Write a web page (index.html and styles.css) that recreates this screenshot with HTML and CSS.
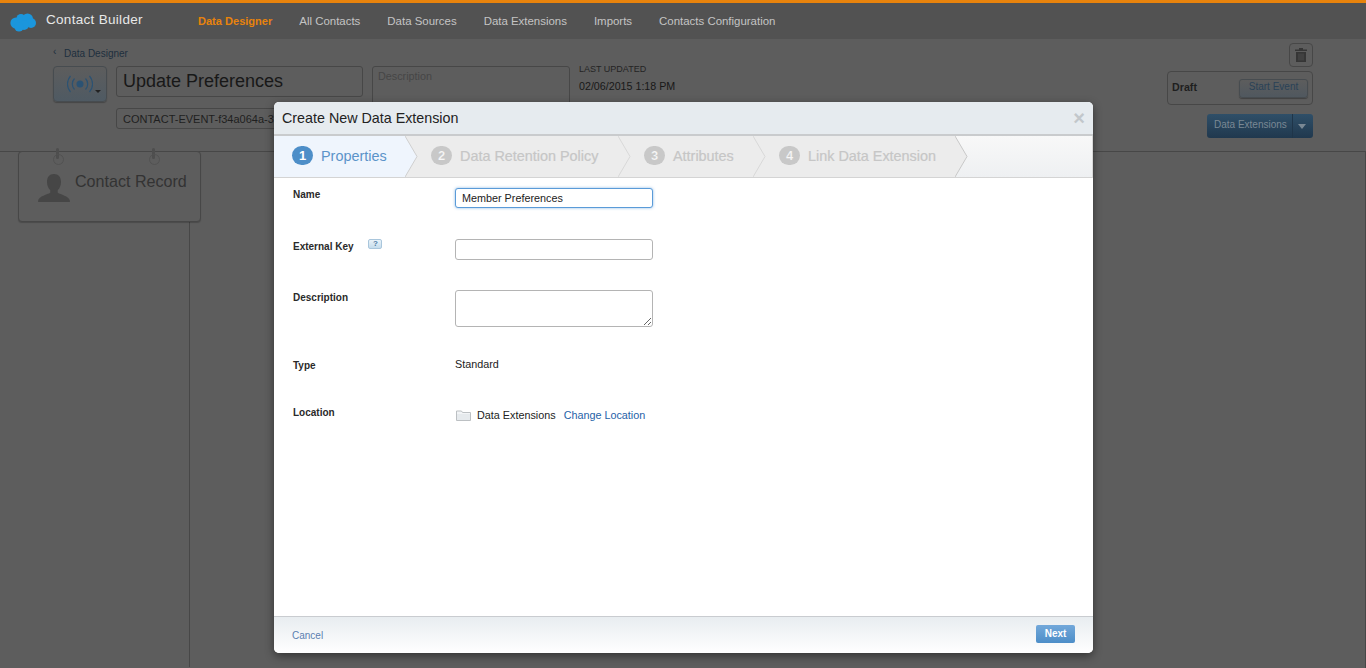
FILE: index.html
```html
<!DOCTYPE html>
<html lang="en">
<head>
    <meta charset="UTF-8">
    <meta name="viewport" content="width=device-width, initial-scale=1.0">
    <title>Contact Builder</title>
    <link rel="stylesheet" href="styles.css">
</head>
<body>
    <header class="topbar">
        <svg class="logo" width="26" height="19" viewBox="0 0 26 19">
            <g fill="#1b96dc">
                <circle cx="6" cy="10" r="5.6"/>
                <circle cx="11" cy="5.5" r="4.6"/>
                <circle cx="17.5" cy="6" r="5.5"/>
                <circle cx="21" cy="10" r="5"/>
                <circle cx="14" cy="12" r="5"/>
                <circle cx="9" cy="14" r="4.6"/>
            </g>
        </svg>
        <span class="app-name">Contact Builder</span>
        <nav class="nav">
            <a class="nav-item active">Data Designer</a>
            <a class="nav-item">All Contacts</a>
            <a class="nav-item">Data Sources</a>
            <a class="nav-item">Data Extensions</a>
            <a class="nav-item">Imports</a>
            <a class="nav-item">Contacts Configuration</a>
        </nav>
    </header>

    <section class="designer">
        <div class="designer-left">
            <div class="breadcrumb"><span class="crumb-arrow">‹</span>Data Designer</div>
            <div class="event-row">
                <button class="icon-btn">
                    <svg width="26" height="18" viewBox="0 0 26 18" fill="none" stroke="#2b5273" stroke-width="1.2">
                        <circle cx="13" cy="9" r="3.500" fill="#2b5273" stroke="none"/>
                        <path d="M7.500 3.500a8 8 0 0 0 0 11"/>
                        <path d="M18.500 3.500a8 8 0 0 1 0 11"/>
                        <path d="M3.500 1a12 12 0 0 0 0 16"/>
                        <path d="M22.500 1a12 12 0 0 1 0 16"/>
                    </svg>
                    <span class="icon-caret"></span>
                </button>
                <div class="event-fields">
                    <div class="field title-field">Update Preferences</div>
                    <div class="field key-field">CONTACT-EVENT-f34a064a-32</div>
                </div>
                <div class="field desc-field">Description</div>
                <div class="updated">
                    <div class="updated-label">LAST UPDATED</div>
                    <div class="updated-date">02/06/2015 1:18 PM</div>
                </div>
            </div>
        </div>
        <div class="designer-right">
            <button class="trash-btn">
                <svg width="12" height="14" viewBox="0 0 12 14" fill="#363636">
                    <path d="M0 1.500h12v1.500H0zM4 0h4v1.500H4zM1 4h10v10H1z"/>
                    <path d="M3.500 5.500h1v7h-1zM5.500 5.500h1v7h-1zM7.500 5.500h1v7h-1z" fill="#4c4c4c"/>
                </svg>
            </button>
            <div class="status-box">
                <strong class="status-text">Draft</strong>
                <button class="start-btn">Start Event</button>
            </div>
            <div class="split-btn">
                <span class="split-label">Data Extensions</span>
                <span class="split-arrow"></span>
            </div>
        </div>
    </section>

    <section class="canvas">
        <div class="lane">
            <div class="card">
                <span class="pin pin-a"></span>
                <span class="pin pin-b"></span>
                <svg class="person" width="32" height="28" viewBox="0 0 34 30" fill="#464646">
                    <path d="M17 0c5 0 7.500 3.500 7.500 8.500 0 3.500-1.500 7-3.500 9v2.500c3 2 12 3.500 13 8.500v1.500H0v-1.500c1-5 10-6.500 13-8.500v-2.500c-2-2-3.500-5.500-3.500-9C9.500 3.500 12 0 17 0z"/>
                </svg>
                <span class="card-title">Contact Record</span>
            </div>
        </div>
    </section>

    <div class="modal">
        <div class="modal-head">
            <span class="modal-title">Create New Data Extension</span>
            <span class="modal-close">×</span>
        </div>
        <div class="steps">
            <div class="step step-active">
                <span class="step-num">1</span>Properties
                <svg class="step-tip" width="13" height="41" viewBox="0 0 13 41"><path d="M0 0L12 20.500 0 41z" fill="#eff5fd"/><path d="M0 0L12 20.500 0 41" fill="none" stroke="#cfcfcf"/></svg>
            </div>
            <div class="step step-two">
                <span class="step-num">2</span>Data Retention Policy
                <svg class="step-tip" width="13" height="41" viewBox="0 0 13 41"><path d="M0 0L12 20.500 0 41" fill="#ececec" stroke="#d8d8d8"/></svg>
            </div>
            <div class="step step-three">
                <span class="step-num">3</span>Attributes
                <svg class="step-tip" width="13" height="41" viewBox="0 0 13 41"><path d="M0 0L12 20.500 0 41" fill="#ececec" stroke="#d8d8d8"/></svg>
            </div>
            <div class="step step-four">
                <span class="step-num">4</span>Link Data Extension
                <svg class="step-tip" width="13" height="41" viewBox="0 0 13 41"><path d="M0 0L12 20.500 0 41" fill="#ececec" stroke="#c8c8c8"/></svg>
            </div>
        </div>
        <form class="modal-body">
            <div class="form-row row-name">
                <label class="form-label">Name</label>
                <input class="text-input focused" type="text" value="Member Preferences">
            </div>
            <div class="form-row row-key">
                <label class="form-label">External Key <span class="help">?</span></label>
                <input class="text-input" type="text">
            </div>
            <div class="form-row row-desc">
                <label class="form-label">Description</label>
                <textarea class="text-area"></textarea>
            </div>
            <div class="form-row row-type">
                <label class="form-label">Type</label>
                <span class="form-value">Standard</span>
            </div>
            <div class="form-row row-location">
                <label class="form-label">Location</label>
                <span class="form-value location">
                    <svg width="15" height="11" viewBox="0 0 15 11">
                        <path d="M.5 1h5l1 1.500h8v8H.5z" fill="#f2f4f6" stroke="#bcc0c3"/>
                        <path d="M1 4h13v6H1z" fill="#e6eaed"/>
                    </svg>
                    <span>Data Extensions</span>
                    <a class="link">Change Location</a>
                </span>
            </div>
        </form>
        <div class="modal-foot">
            <a class="cancel">Cancel</a>
            <button class="next-btn">Next</button>
        </div>
    </div>
</body>
</html>
```

FILE: styles.css
```css
* {
    margin: 0;
    padding: 0;
    box-sizing: border-box;
}

:root {
    --page: #5d5d5d;
    --line: #474747;
    --ink: #1f1f1f;
    --blue: #4d8ec8;
}

html, body {
    height: 100%;
}

body {
    display: flex;
    flex-direction: column;
    overflow: hidden;
    background: var(--page);
    color: var(--ink);
    font-family: "Liberation Sans", Arial, sans-serif;
    font-size: 11px;
}

button {
    font-family: inherit;
}

/* Top bar */
.topbar {
    display: flex;
    align-items: center;
    flex: none;
    height: 39px;
    padding-left: 10px;
    border-top: 3px solid #e8830c;
    background: #525252;
}

.logo {
    flex: none;
    margin-top: 2px;
}

.app-name {
    width: 152px;
    margin-left: 10px;
    margin-top: -3px;
    color: #e8e8e8;
    font-size: 13.5px;
    letter-spacing: 0.3px;
}

.nav {
    display: flex;
    gap: 27px;
}

.nav-item {
    color: #c4c4c4;
    font-size: 11.450px;
}

.nav-item.active {
    color: #e8830c;
    font-size: 11.050px;
    font-weight: bold;
}

/* Event header */
.designer {
    display: flex;
    justify-content: space-between;
    flex: none;
    height: 112px;
    padding: 0 53px;
}

.breadcrumb {
    height: 27px;
    padding-top: 7px;
    color: #1e2f3d;
    font-size: 10px;
}

.crumb-arrow {
    display: inline-block;
    width: 11px;
    vertical-align: 2px;
}

.event-row {
    display: flex;
}

.icon-btn {
    display: flex;
    justify-content: center;
    align-items: center;
    width: 54px;
    height: 36px;
    border: 1px solid #474c50;
    border-radius: 4px;
    background: linear-gradient(#5d5d5d, #4f5a63);
    box-shadow: 0 1px 1px rgba(0, 0, 0, 0.25);
    position: relative;
}

.icon-caret {
    position: absolute;
    right: 5px;
    bottom: 8px;
    border: 3px solid transparent;
    border-top-color: #222;
    border-bottom: 0;
}

.event-fields {
    width: 247px;
    margin-left: 9px;
    margin-right: 9px;
}

.field {
    border: 1px solid var(--line);
    border-radius: 3px;
}

.title-field {
    height: 31px;
    padding-left: 6px;
    color: #181818;
    font-size: 18px;
    line-height: 28px;
}

.key-field {
    width: 175px;
    height: 21px;
    margin-top: 11px;
    padding-left: 6px;
    font-size: 11px;
    line-height: 20px;
    white-space: nowrap;
}

.desc-field {
    width: 198px;
    height: 50px;
    padding: 3px 5px;
    color: #464646;
    font-size: 10.800px;
}

.updated {
    margin-left: 9px;
    margin-top: -2px;
}

.updated-label {
    color: #242424;
    font-size: 9px;
}

.updated-date {
    margin-top: 6px;
    color: #181818;
    font-size: 10.700px;
}

.designer-right {
    display: flex;
    flex-direction: column;
    align-items: flex-end;
    padding-top: 4px;
}

.trash-btn {
    display: flex;
    justify-content: center;
    align-items: center;
    width: 24px;
    height: 24px;
    border: 1px solid var(--line);
    border-radius: 4px;
    background: none;
}

.status-box {
    display: flex;
    justify-content: space-between;
    align-items: center;
    width: 146px;
    height: 34px;
    margin-top: 4px;
    padding: 0 4px 0 4px;
    border: 1px solid var(--line);
    border-radius: 4px;
    font-size: 10.700px;
}

.status-text {
    margin-top: -2px;
}

.start-btn {
    width: 69px;
    height: 19px;
    padding-bottom: 3px;
    border: 1px solid #474c50;
    border-radius: 3px;
    background: linear-gradient(#5d5d5d, #50585f);
    box-shadow: 0 1px 1px rgba(0, 0, 0, 0.3);
    color: #2a4257;
    font-size: 10px;
}

.split-btn {
    display: flex;
    width: 106px;
    height: 24px;
    margin-top: 9px;
    border-radius: 3px;
    background: linear-gradient(#2f4f68, #20384e);
    color: #7a8894;
    font-size: 10px;
    line-height: 22px;
}

.split-label {
    width: 86px;
    padding-left: 7px;
    border-right: 1px solid #1f3549;
    white-space: nowrap;
}

.split-arrow {
    align-self: center;
    margin-left: 5px;
    border: 4px solid transparent;
    border-top: 5px solid #7a8894;
    border-bottom: 0;
}

/* Canvas behind the dialog */
.canvas {
    flex: 1;
    border-top: 1px solid var(--line);
    border-right: 1px solid var(--line);
}

.lane {
    width: 190px;
    height: 100%;
    border-right: 1px solid var(--line);
}

.card {
    display: flex;
    position: relative;
    width: 183px;
    height: 71px;
    margin-left: 18px;
    margin-top: -1px;
    border: 1px solid var(--line);
    border-radius: 4px;
    background: var(--page);
    box-shadow: 0 1px 1px rgba(0, 0, 0, 0.2);
}

.pin {
    position: absolute;
    top: -4px;
    width: 3px;
    height: 11px;
    border-radius: 2px;
    background: #4e4e4e;
}

.pin::after {
    content: "";
    position: absolute;
    left: -3px;
    top: 6px;
    width: 9px;
    height: 9px;
    border: 1px solid #525252;
    border-radius: 50%;
}

.pin-a {
    left: 37px;
}

.pin-b {
    left: 133px;
}

.person {
    margin: 22px 0 0 19px;
}

.card-title {
    margin: 20px 0 0 5px;
    color: #333;
    font-size: 16.100px;
    white-space: nowrap;
}

/* Dialog */
.modal {
    display: flex;
    flex-direction: column;
    position: absolute;
    left: 274px;
    top: 102px;
    width: 819px;
    height: 551px;
    border-radius: 5px;
    background: #fff;
    box-shadow: 0 3px 10px rgba(0, 0, 0, 0.45);
    overflow: hidden;
}

.modal-head {
    display: flex;
    justify-content: space-between;
    align-items: center;
    flex: none;
    height: 34px;
    padding: 0 8px;
    border-bottom: 2px solid #c9cbcd;
    background: #e6ebef;
}

.modal-title {
    color: #222;
    font-size: 14.300px;
}

.modal-close {
    color: #c2c7cb;
    font-size: 20px;
    font-weight: bold;
    line-height: 1;
}

.steps {
    display: flex;
    flex: none;
    height: 42px;
    border-bottom: 1px solid #d4d4d4;
    border-right: 1px solid #d8d8d8;
    background: linear-gradient(#f8f8f8, #eef0f2);
}

.step {
    display: flex;
    align-items: center;
    position: relative;
    padding-left: 26px;
    padding-bottom: 2px;
    background: #ececec;
    color: #c6c6c6;
    font-size: 14.400px;
    white-space: nowrap;
    -webkit-text-stroke: 0.2px #c6c6c6;
}

.step-active {
    width: 131px;
    padding-left: 18px;
    background: #eff5fd;
    color: #5b93c9;
    -webkit-text-stroke: 0;
}

.step-two {
    width: 213px;
}

.step-three {
    width: 135px;
}

.step-four {
    width: 202px;
}

.step-num {
    flex: none;
    width: 21px;
    height: 19px;
    margin-right: 8px;
    border-radius: 10px;
    background: #c8c8c8;
    color: #f6f6f6;
    font-size: 13px;
    font-weight: bold;
    line-height: 19px;
    text-align: center;
}

.step-active .step-num {
    background: var(--blue);
    color: #fff;
}

.step-tip {
    position: absolute;
    left: 100%;
    top: 0;
    z-index: 1;
}

.modal-body {
    flex: 1;
    padding: 10px 0 0 19px;
}

.form-row {
    display: flex;
    align-items: flex-start;
}

.form-label {
    flex: none;
    width: 162px;
    color: #2a2a2a;
    font-size: 10px;
    font-weight: bold;
}

.row-name {
    height: 51px;
}

.row-key {
    height: 51px;
}

.row-desc {
    height: 68px;
}

.row-type {
    height: 47px;
}

.row-name .form-label {
    padding-top: 1px;
}

.row-desc .form-label {
    padding-top: 2px;
}

.row-type .form-label {
    padding-top: 2px;
}

.row-location .form-label {
    padding-top: 2px;
}

.help {
    display: inline-block;
    width: 14px;
    height: 10px;
    margin-left: 12px;
    border: 1px solid #a9c6dc;
    border-radius: 2px;
    background: linear-gradient(#eaf3f9, #c5dcec);
    color: #4d7ea6;
    font-size: 8px;
    line-height: 8px;
    text-align: center;
    vertical-align: 4px;
}

.text-input {
    width: 198px;
    height: 21px;
    padding: 0 6px;
    border: 1px solid #b4b4b4;
    border-radius: 3px;
    color: #222;
    font-family: inherit;
    font-size: 10.800px;
    outline: none;
}

.text-input.focused {
    height: 20px;
    border-color: #5a9bd8;
    box-shadow: 0 0 3px rgba(90, 155, 216, 0.7);
}

.text-area {
    width: 198px;
    height: 37px;
    border: 1px solid #b4b4b4;
    border-radius: 3px;
    outline: none;
}

.form-value {
    color: #222;
    font-size: 10.800px;
}

.location {
    display: flex;
    align-items: center;
    margin-top: 4px;
}

.location svg {
    margin: 0 6px 0 1px;
}

.link {
    margin-left: 8px;
    color: #1f62a8;
}

.modal-foot {
    display: flex;
    justify-content: space-between;
    align-items: center;
    flex: none;
    height: 37px;
    padding: 0 18px;
    border-top: 1px solid #c9ccd0;
    background: linear-gradient(#e8edf0, #fff);
}

.cancel {
    color: #5b7fb0;
    font-size: 10px;
}

.next-btn {
    width: 39px;
    height: 18px;
    margin-bottom: 2px;
    padding-bottom: 2px;
    border: none;
    border-radius: 2px;
    background: linear-gradient(#72a8da, #4d8ec8);
    color: #fff;
    font-size: 10px;
    font-weight: bold;
}
```
